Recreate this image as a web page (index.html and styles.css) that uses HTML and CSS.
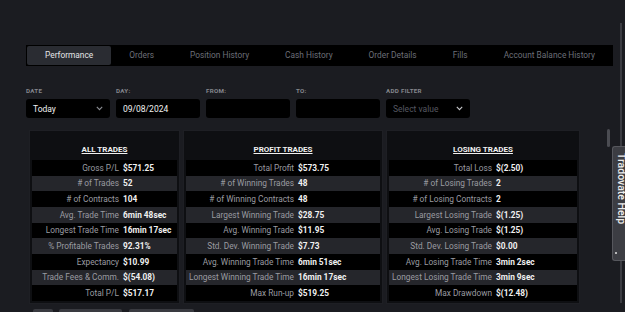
FILE: index.html
```html
<!DOCTYPE html>
<html lang="en">
  <head>
    <meta charset="UTF-8" />
    <meta name="viewport" content="width=device-width, initial-scale=1.0" />
    <title>Performance Report</title>
    <link rel="stylesheet" href="styles.css">
  </head>

  <body>
    <div class="page">
      <nav class="tabs">
        <button class="tab active">Performance</button>
        <button class="tab">Orders</button>
        <button class="tab">Position History</button>
        <button class="tab">Cash History</button>
        <button class="tab">Order Details</button>
        <button class="tab">Fills</button>
        <button class="tab">Account Balance History</button>
      </nav>

      <div class="filters">
        <div class="field">
          <label>Date</label>
          <div class="input">
            <span>Today</span>
            <svg class="chevron" width="7" height="5" viewBox="0 0 7 5"><path d="M0.8 0.9 L3.5 3.7 L6.2 0.9" /></svg>
          </div>
        </div>
        <div class="field">
          <label>Day:</label>
          <div class="input"><span>09/08/2024</span></div>
        </div>
        <div class="field">
          <label>From:</label>
          <div class="input"></div>
        </div>
        <div class="field">
          <label>To:</label>
          <div class="input"></div>
        </div>
        <div class="field">
          <label>Add Filter</label>
          <div class="input">
            <span class="placeholder">Select value</span>
            <svg class="chevron light" width="7" height="5" viewBox="0 0 7 5"><path d="M0.8 0.9 L3.5 3.7 L6.2 0.9" /></svg>
          </div>
        </div>
      </div>

      <div class="panels">
        <section class="panel panel-all">
          <h2>All Trades</h2>
          <div class="row"><span class="label">Gross P/L</span><span class="value">$571.25</span></div>
          <div class="row"><span class="label"># of Trades</span><span class="value">52</span></div>
          <div class="row"><span class="label"># of Contracts</span><span class="value">104</span></div>
          <div class="row"><span class="label">Avg. Trade Time</span><span class="value">6min 48sec</span></div>
          <div class="row"><span class="label">Longest Trade Time</span><span class="value">16min 17sec</span></div>
          <div class="row"><span class="label">% Profitable Trades</span><span class="value">92.31%</span></div>
          <div class="row"><span class="label">Expectancy</span><span class="value">$10.99</span></div>
          <div class="row"><span class="label">Trade Fees &amp; Comm.</span><span class="value">$(54.08)</span></div>
          <div class="row"><span class="label">Total P/L</span><span class="value">$517.17</span></div>
        </section>

        <section class="panel panel-profit">
          <h2>Profit Trades</h2>
          <div class="row"><span class="label">Total Profit</span><span class="value">$573.75</span></div>
          <div class="row"><span class="label"># of Winning Trades</span><span class="value">48</span></div>
          <div class="row"><span class="label"># of Winning Contracts</span><span class="value">48</span></div>
          <div class="row"><span class="label">Largest Winning Trade</span><span class="value">$28.75</span></div>
          <div class="row"><span class="label">Avg. Winning Trade</span><span class="value">$11.95</span></div>
          <div class="row"><span class="label">Std. Dev. Winning Trade</span><span class="value">$7.73</span></div>
          <div class="row"><span class="label">Avg. Winning Trade Time</span><span class="value">6min 51sec</span></div>
          <div class="row"><span class="label">Longest Winning Trade Time</span><span class="value">16min 17sec</span></div>
          <div class="row"><span class="label">Max Run-up</span><span class="value">$519.25</span></div>
        </section>

        <section class="panel panel-losing">
          <h2>Losing Trades</h2>
          <div class="row"><span class="label">Total Loss</span><span class="value">$(2.50)</span></div>
          <div class="row"><span class="label"># of Losing Trades</span><span class="value">2</span></div>
          <div class="row"><span class="label"># of Losing Contracts</span><span class="value">2</span></div>
          <div class="row"><span class="label">Largest Losing Trade</span><span class="value">$(1.25)</span></div>
          <div class="row"><span class="label">Avg. Losing Trade</span><span class="value">$(1.25)</span></div>
          <div class="row"><span class="label">Std. Dev. Losing Trade</span><span class="value">$0.00</span></div>
          <div class="row"><span class="label">Avg. Losing Trade Time</span><span class="value">3min 2sec</span></div>
          <div class="row"><span class="label">Longest Losing Trade Time</span><span class="value">3min 9sec</span></div>
          <div class="row"><span class="label">Max Drawdown</span><span class="value">$(12.48)</span></div>
        </section>
      </div>

      <div class="actions">
        <button class="action small"></button>
        <button class="action"></button>
        <button class="action wide"></button>
      </div>
    </div>

    <div class="scroll-track"></div>
    <div class="scroll-thumb"></div>

    <div class="help-tab">Tradovate Help<span class="help-dot"></span></div>
  </body>
</html>
```

FILE: styles.css
```css
:root {
  --bg: #1b1c21;
  --black: #000000;
  --stripe: #25262b;
  --panel: #0e0f12;
  --text: #f1f1f1;
  --muted: #9a9ba1;
  --dim: #6c6f78;
}

body {
  margin: 0;
  height: 312px;
  overflow: hidden;
  font-family: 'Roboto', 'Liberation Sans', sans-serif;
  background-color: var(--bg);
  color: var(--text);
}

.page {
  padding: 45px 0 0 26px;
  width: 587px;
}

/* tabs */

.tabs {
  display: flex;
  height: 19px;
  padding: 1px;
  background-color: var(--black);
}

.tab {
  flex-shrink: 0;
  padding: 0 18px;
  height: 19px;
  border: none;
  border-radius: 2px;
  background: none;
  color: var(--dim);
  font-family: inherit;
  font-size: 8.35px;
  line-height: 19px;
  white-space: nowrap;
}

.tab.active {
  background-color: #2a2c32;
  color: #e4e4e6;
}

/* filters */

.filters {
  display: flex;
  gap: 6px;
  margin-top: 21px;
}

.field {
  width: 84px;
}

.field label {
  display: block;
  height: 8px;
  margin-bottom: 4px;
  font-size: 6.2px;
  font-weight: 700;
  line-height: 8px;
  letter-spacing: 0.3px;
  text-transform: uppercase;
  color: #85878d;
}

.input {
  display: flex;
  align-items: center;
  justify-content: space-between;
  height: 19px;
  padding: 0 7px;
  border-radius: 3px;
  background-color: var(--black);
  font-size: 8.5px;
  color: var(--text);
}

.placeholder {
  color: #565860;
}

.chevron path {
  fill: none;
  stroke: #8d8f95;
  stroke-width: 1.1;
}

.chevron.light path {
  stroke: #c8c9cc;
}

/* stat panels */

.panels {
  display: flex;
  gap: 3px;
  margin: 12px 0 0 3px;
}

.panel {
  width: 151px;
  padding: 0 2px 2px;
  border: 1px solid #1e1f24;
  background-color: var(--panel);
  box-sizing: border-box;
}

.panel-all { width: 151px; --label-w: 87px; }
.panel-profit { width: 200px; --label-w: 108px; }
.panel-losing { width: 194px; --label-w: 103px; }

.panel h2 {
  margin: 0;
  padding: 13px 0 4px;
  font-size: 8px;
  font-weight: 700;
  line-height: 12px;
  text-align: center;
  text-transform: uppercase;
  text-decoration: underline;
  text-underline-offset: 1px;
}

.row {
  display: grid;
  grid-template-columns: var(--label-w) 1fr;
  gap: 4px;
  height: 15.66px;
  align-items: center;
  font-size: 8.3px;
  background-color: var(--black);
}

.row:nth-of-type(even) {
  background-color: var(--stripe);
}

.label {
  text-align: right;
  color: var(--muted);
  white-space: nowrap;
}

.value {
  font-weight: 700;
  white-space: nowrap;
}

/* bottom buttons, mostly below the fold */

.actions {
  display: flex;
  gap: 6px;
  margin: 5px 0 0 7px;
}

.action {
  width: 63px;
  height: 20px;
  border: none;
  border-radius: 2px;
  background-color: #393a40;
}

.action.small { width: 20px; }
.action.wide { width: 65px; margin-left: 1px; }

/* right edge overlays */

.scroll-track {
  position: absolute;
  left: 620px;
  top: 23px;
  width: 2px;
  height: 280px;
  background-color: #3b3c42;
}

.scroll-thumb {
  position: absolute;
  left: 607px;
  top: 129px;
  width: 3px;
  height: 18px;
  border-radius: 2px;
  background-color: #4b4c52;
}

.help-tab {
  position: absolute;
  left: 612px;
  top: 146px;
  width: 13px;
  height: 107px;
  padding: 6px 0 0 2px;
  border: 1px solid #56575d;
  border-right: none;
  border-radius: 3px 0 0 3px;
  background-color: #3c3d43;
  writing-mode: vertical-rl;
  font-size: 10.5px;
  font-weight: 500;
  line-height: 13px;
  color: #ececec;
  white-space: nowrap;
}

.help-dot {
  position: absolute;
  left: 2px;
  bottom: 6px;
  width: 2px;
  height: 2px;
  border-radius: 50%;
  background-color: #e0e0e0;
}
```
